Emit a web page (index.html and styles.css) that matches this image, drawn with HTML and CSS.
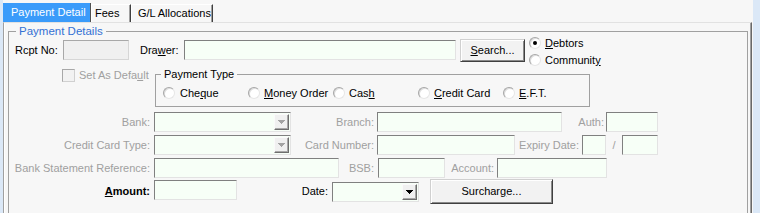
FILE: index.html
```html
<!DOCTYPE html>
<html>
<head>
<meta charset="utf-8">
<title>Payment Detail</title>
<link rel="stylesheet" href="styles.css">
</head>
<body>
<div class="win">
  <div class="tabs">
    <div class="tab active t1">Payment Detail</div>
    <div class="tab t2">Fees</div>
    <div class="tab t3">G/L Allocations</div>
  </div>
  <div class="page">
    <fieldset class="group">
      <legend class="glegend">Payment Details</legend>

      <div class="row r1">
        <span class="lbl l-rcpt">Rcpt No:</span>
        <span class="inp off w-rcpt"></span>
        <span class="lbl l-drawer">Dra<u>w</u>er:</span>
        <span class="inp w-drawer"></span>
        <span class="btn b-search"><u>S</u>earch...</span>
        <div class="rgroup">
          <span class="radio"><span class="dot on"></span><span><u>D</u>ebtors</span></span>
          <span class="radio"><span class="dot"></span><span>Communit<u>y</u></span></span>
        </div>
      </div>

      <div class="row r2">
        <span class="chk"></span>
        <span class="lbl dis l-def">Set As Defa<u>u</u>lt</span>
        <fieldset class="ptype">
          <legend class="plegend">Payment Type</legend>
          <div class="pgrid">
            <span class="radio"><span class="dot"></span><span class="first">Che<u>q</u>ue</span></span>
            <span class="radio"><span class="dot"></span><span><u>M</u>oney Order</span></span>
            <span class="radio"><span class="dot"></span><span>Cas<u>h</u></span></span>
            <span class="radio"><span class="dot"></span><span><u>C</u>redit Card</span></span>
            <span class="radio"><span class="dot"></span><span><u>E</u>.F.T.</span></span>
          </div>
        </fieldset>
      </div>

      <div class="row r3">
        <span class="lbl dis rt w141">Bank:</span>
        <span class="combo ml4 w137"><span class="dd"><svg class="arr" width="7" height="4" viewBox="0 0 7 4" shape-rendering="crispEdges"><polygon points="0,0 7,0 4,4 3,4" fill="#a3a3a3"/></svg></span></span>
        <span class="lbl dis rt w83">Branch:</span>
        <span class="inp ml3 w185"></span>
        <span class="lbl dis rt w42">Auth:</span>
        <span class="inp ml2 w52"></span>
      </div>

      <div class="row r4">
        <span class="lbl dis rt w141">Credit Card Type:</span>
        <span class="combo ml4 w137"><span class="dd"><svg class="arr" width="7" height="4" viewBox="0 0 7 4" shape-rendering="crispEdges"><polygon points="0,0 7,0 4,4 3,4" fill="#a3a3a3"/></svg></span></span>
        <span class="lbl dis rt w83">Card Number:</span>
        <span class="inp ml3 w138"></span>
        <span class="lbl dis rt w64">Expiry Date:</span>
        <span class="inp ml3 w24"></span>
        <span class="lbl dis slash">/</span>
        <span class="inp w36"></span>
      </div>

      <div class="row r5">
        <span class="lbl dis rt w141">Bank Statement Reference:</span>
        <span class="inp ml4 w185"></span>
        <span class="lbl dis rt w35">BSB:</span>
        <span class="inp ml4 w67"></span>
        <span class="lbl dis rt w49">Account:</span>
        <span class="inp ml3 w110"></span>
      </div>

      <div class="row r6">
        <span class="lbl rt w141 bold"><u>A</u>mount:</span>
        <span class="inp ml4 w83 mt1"></span>
        <span class="lbl rt w91">Date:</span>
        <span class="combo ml4 w87 mt3"><span class="dd"><svg class="arr" width="7" height="4" viewBox="0 0 7 4" shape-rendering="crispEdges"><polygon points="0,0 7,0 4,4 3,4" fill="#000"/></svg></span></span>
        <span class="btn b-sur">Surchar<u>g</u>e...</span>
      </div>
    </fieldset>
  </div>
</div>
</body>
</html>
```

FILE: styles.css
```css
* { box-sizing: border-box; }
html, body { margin: 0; padding: 0; }
body {
  width: 760px;
  height: 213px;
  overflow: hidden;
  background: #dbe8f7;
  font-family: "Liberation Sans", Arial, sans-serif;
  font-size: 11px;
  color: #000;
}
u { text-decoration: underline; text-underline-offset: 1px; }

.win {
  margin-left: 3px;
  width: 750px;
  height: 213px;
  background: #f7f7f7;
  padding-top: 3px;
}

/* tabs */
.tabs {
  display: flex;
  align-items: flex-end;
  height: 19px;
}
.tab {
  height: 18px;
  line-height: 16px;
  white-space: nowrap;
  border-top: 1px solid #ffffff;
  border-left: 1px solid #ffffff;
  border-right: 1px solid #404040;
  box-shadow: inset -1px 0 #a0a0a0;
}
.tab.active {
  height: 19px;
  line-height: 19px;
  background: #3a9bfa;
  color: #ffffff;
  border: none;
  border-right: 1px solid #505050;
  box-shadow: none;
}
.t1 { width: 88px; padding-left: 8px; }
.t2 { width: 40px; padding-left: 3px; }
.t3 { width: 82px; padding-left: 6px; }

/* tab page */
.page {
  width: 749px;
  height: 191px;
  overflow: hidden;
  border-top: 1px solid #e2e2e2;
  border-left: 1px solid #a0a0a0;
  border-right: 1px solid #696969;
  box-shadow: inset 1px 0 #ffffff, inset -1px 0 #a0a0a0;
  padding: 2px 0 0 4px;
}

.group {
  margin: 0;
  padding: 1px 0 0 0;
  min-width: 0;
  width: 740px;
  height: 200px;
  border: 1px solid #a0a0a0;
}
.glegend {
  margin-left: 7px;
  padding: 0 3px;
  line-height: 13px;
  font-size: 11.5px;
  color: #3471d4;
}

/* rows */
.row { display: flex; align-items: flex-start; }
.r1 { height: 24px; }
.r3 { height: 20px; margin-top: 5px; }
.r4 { height: 20px; margin-top: 3px; }
.r5 { height: 20px; margin-top: 3px; }
.r6 { height: 25px; margin-top: 1px; }

.lbl { display: block; line-height: 20px; white-space: nowrap; flex: none; }
.dis { color: #a0a0a0; }
.rt { text-align: right; }
.bold { font-weight: bold; }
.r6 .lbl { margin-top: 2px; }

.inp {
  display: block;
  flex: none;
  height: 20px;
  border: 1px solid;
  border-color: #808080 #e3e3e3 #e3e3e3 #808080;
  background: #f7fff7;
}
.off {
  background: #f0f0f0;
  border-color: #a8a8a8 #d6d6d6 #d6d6d6 #a8a8a8;
}

.combo {
  display: flex;
  justify-content: flex-end;
  flex: none;
  height: 20px;
  padding: 1px;
  border: 1px solid;
  border-color: #808080 #e3e3e3 #e3e3e3 #808080;
  background: #f7fff7;
}
.dd {
  display: flex;
  align-items: center;
  justify-content: center;
  width: 15px;
  height: 100%;
  background: #f0f0f0;
  border: 1px solid;
  border-color: #fafafa #6e6e6e #6e6e6e #fafafa;
  box-shadow: inset -1px -1px #a8a8a8;
}
.arr { display: block; }

.btn {
  display: block;
  flex: none;
  text-align: center;
  background: #f2f2f2;
  border: 1px solid;
  border-color: #d0d0d0 #404040 #404040 #d0d0d0;
  box-shadow: inset 1px 1px #ffffff, inset -1px -1px #8a8a8a;
  white-space: nowrap;
}
.b-search { margin-left: 4px; width: 65px; height: 23px; line-height: 21px; }
.b-sur { margin-left: 11px; width: 123px; height: 25px; line-height: 23px; }

/* row 1 */
.r1 .lbl, .r1 .inp { margin-top: 1px; }
.l-rcpt { margin-left: 6px; width: 48px; }
.w-rcpt { width: 66px; }
.l-drawer { margin-left: 11px; width: 44px; }
.w-drawer { width: 272px; }

.rgroup {
  margin-left: 4px;
  margin-top: -3px;
  display: flex;
  flex-direction: column;
  gap: 3px;
}
.radio {
  display: flex;
  align-items: center;
  gap: 4px;
  height: 14px;
  white-space: nowrap;
}
.dot {
  position: relative;
  flex: none;
  width: 12px;
  height: 12px;
  border-radius: 50%;
  border: 1px solid;
  border-color: #a6a6a6 #e6e6e6 #e6e6e6 #a6a6a6;
  background: #ffffff;
  box-shadow: inset 1px 1px #dcdcdc;
}
.dot.on::after {
  content: "";
  position: absolute;
  left: 3px;
  top: 3px;
  width: 4px;
  height: 4px;
  border-radius: 50%;
  background: #000;
}

/* row 2 */
.chk {
  display: block;
  flex: none;
  margin-left: 53px;
  margin-top: 6px;
  width: 13px;
  height: 13px;
  border: 1px solid;
  border-color: #a8a8a8 #d0d0d0 #d0d0d0 #a8a8a8;
  background: #f2f2f2;
}
.l-def { margin-left: 4px; margin-top: 6px; width: 76px; line-height: 13px; }
.ptype {
  margin: 5px 0 0 0;
  padding: 5px 0 6px 0;
  min-width: 0;
  width: 435px;
  border: 1px solid #a0a0a0;
}
.plegend { margin-left: 5px; padding: 0 3px; line-height: 13px; }
.pgrid {
  display: grid;
  grid-template-columns: repeat(5, 85px);
  padding-left: 7px;
}
.first { margin-left: 1px; }

/* widths / spacing */
.w141 { width: 141px; }
.w137 { width: 137px; }
.w83 { width: 83px; }
.w185 { width: 185px; }
.w42 { width: 42px; }
.w52 { width: 52px; }
.w138 { width: 138px; }
.w64 { width: 64px; }
.w24 { width: 24px; }
.w36 { width: 36px; }
.w35 { width: 35px; }
.w67 { width: 67px; }
.w49 { width: 49px; }
.w110 { width: 110px; }
.w91 { width: 91px; }
.w87 { width: 87px; }
.ml2 { margin-left: 2px; }
.ml3 { margin-left: 3px; }
.ml4 { margin-left: 4px; }
.mt1 { margin-top: 1px; }
.mt3 { margin-top: 3px; }
.slash { width: 16px; text-align: center; }
```
